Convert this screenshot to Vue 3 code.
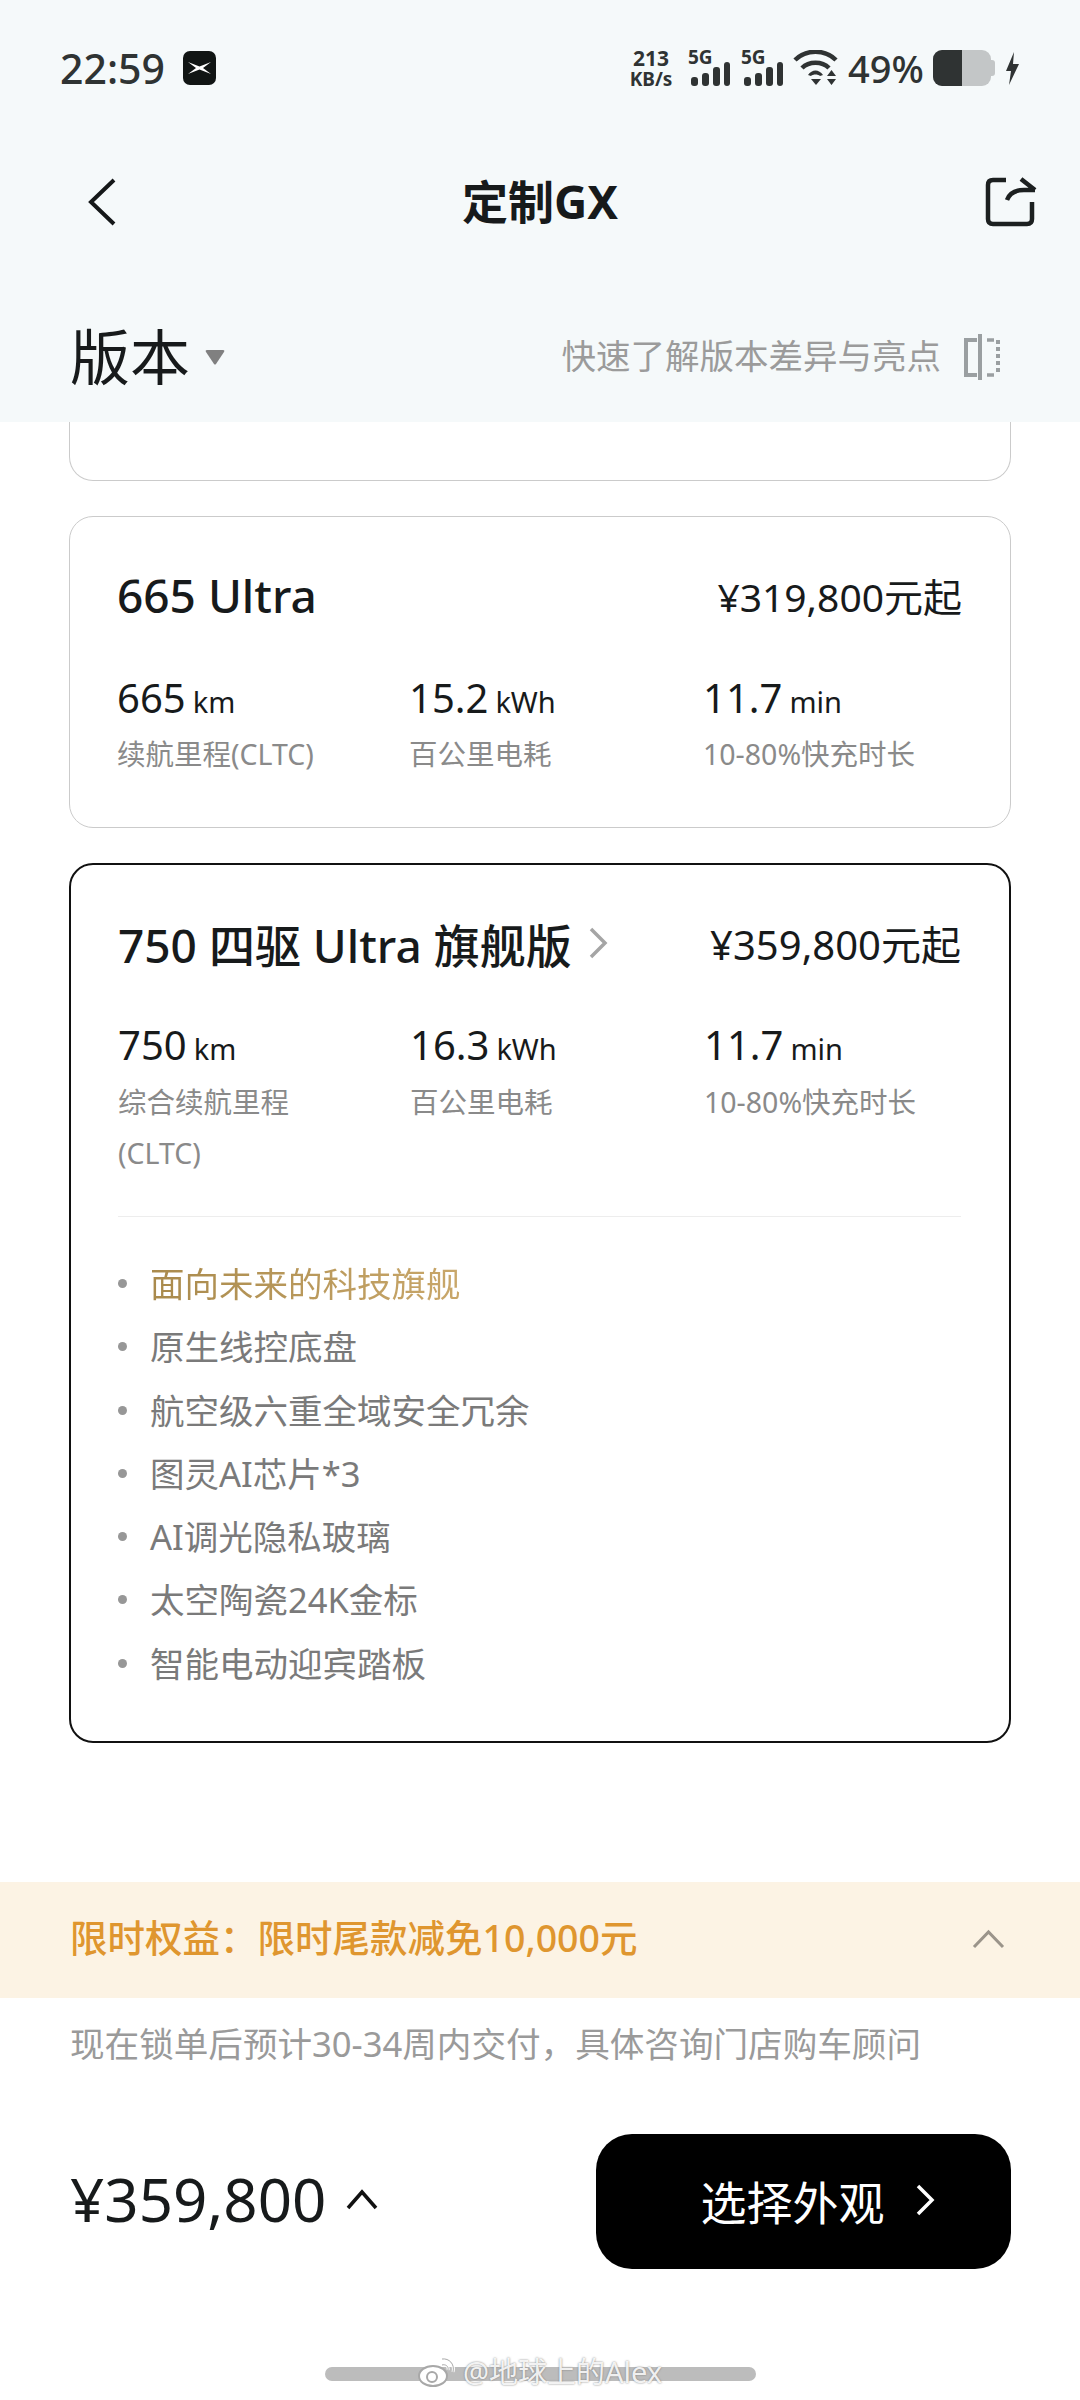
<script setup>
const stats665 = [
  { value: '665', unit: 'km', label: '续航里程(CLTC)' },
  { value: '15.2', unit: 'kWh', label: '百公里电耗' },
  { value: '11.7', unit: 'min', label: '10-80%快充时长' },
];
const stats750 = [
  { value: '750', unit: 'km', label: '综合续航里程(CLTC)' },
  { value: '16.3', unit: 'kWh', label: '百公里电耗' },
  { value: '11.7', unit: 'min', label: '10-80%快充时长' },
];
const features = [
  '原生线控底盘',
  '航空级六重全域安全冗余',
  '图灵AI芯片*3',
  'AI调光隐私玻璃',
  '太空陶瓷24K金标',
  '智能电动迎宾踏板',
];
</script>

<template>
  <div class="page">
    <header class="top">
      <div class="status">
        <div class="status-left">
          <span class="time">22:59</span>
          <svg class="app-badge" width="33" height="34" viewBox="0 0 33 34">
            <rect width="33" height="34" rx="7" fill="#111514" />
            <path d="M5 11 L16.5 15.500 L28 11 L20 17 L28 23 L16.5 18.500 L5 23 L13 17 Z" fill="#fff" />
          </svg>
        </div>
        <div class="status-right">
          <div class="speed"><span>213</span><span class="speed-unit">KB/s</span></div>
          <div v-for="n in 2" :key="n" class="net">
            <span class="net-label">5G</span>
            <svg class="bars" width="39" height="24" viewBox="0 0 39 24">
              <rect x="0" y="15" width="7" height="9" rx="3" fill="#2f3333" />
              <rect x="11" y="11" width="7" height="13" rx="3" fill="#2f3333" />
              <rect x="22" y="5" width="7" height="19" rx="3" fill="#2f3333" />
              <rect x="33" y="0" width="6" height="24" rx="3" fill="#2f3333" />
            </svg>
          </div>
          <svg class="wifi" width="45" height="36" viewBox="0 0 45 36">
            <path d="M2 10 C13 -1 32 -1 43 10" fill="none" stroke="#2f3333" stroke-width="4.500" />
            <path d="M9 18 C16 11 29 11 36 18" fill="none" stroke="#2f3333" stroke-width="4.500" />
            <path d="M15 25 C19 19 26 19 30 25 L27 26 C25 24 20 24 18 26 Z" fill="#2f3333" />
            <path d="M18 29 H28 L23 35 Z" fill="#2f3333" />
            <path d="M34 26 L38.500 20 L43 26 Z M34 29 H43 L38.500 35 Z" fill="#2f3333" />
          </svg>
          <span class="battery-text">49%</span>
          <div class="battery">
            <div class="battery-body"><div class="battery-level" :style="{ width: '50%' }"></div></div>
            <div class="battery-nub"></div>
          </div>
          <svg class="bolt" width="15" height="33" viewBox="0 0 15 33">
            <path d="M9 0 L1 19 H6 L4 33 L14 12 H8 Z" fill="#2f3333" />
          </svg>
        </div>
      </div>

      <nav class="nav">
        <svg class="back" width="30" height="48" viewBox="0 0 30 48">
          <path d="M27 2 L4 24 L27 46" fill="none" stroke="#151819" stroke-width="4" />
        </svg>
        <h1 class="nav-title">定制GX</h1>
        <svg class="share" width="52" height="50" viewBox="0 0 52 50">
          <path d="M21 3 H8 Q3 3 3 8 V42 Q3 47 8 47 H42 Q47 47 47 42 V25" fill="none" stroke="#1c2020" stroke-width="4.500" />
          <path d="M22 23 C25 15 31 13 39 13 H50 M36 2 L50 13" fill="none" stroke="#1c2020" stroke-width="4.500" />
        </svg>
      </nav>

      <div class="version-row">
        <div class="version-left">
          <span class="version-title">版本</span>
          <svg class="caret" width="22" height="18" viewBox="0 0 22 18">
            <path d="M3 2 H19 Q21 2 20 4 L12 16 Q11 17 10 16 L2 4 Q1 2 3 2 Z" fill="#808080" />
          </svg>
        </div>
        <div class="version-right">
          <span class="hint">快速了解版本差异与亮点</span>
          <svg class="compare" width="40" height="46" viewBox="0 0 40 46">
            <path d="M15 6 H4 V41 H15" fill="none" stroke="#9a9fa1" stroke-width="4" />
            <path d="M18 0 V46" stroke="#9a9fa1" stroke-width="4" />
            <path d="M25 6 H32 M25 41 H32" stroke="#9a9fa1" stroke-width="3.500" />
            <path d="M36 6 V41" stroke="#9a9fa1" stroke-width="4" stroke-dasharray="4 3" />
          </svg>
        </div>
      </div>
    </header>

    <main class="list">
      <div class="card card-stub"></div>

      <section class="card">
        <div class="card-head">
          <span class="card-name">665 Ultra</span>
          <span class="card-price">¥319,800元起</span>
        </div>
        <div class="stats">
          <div v-for="s in stats665" :key="s.label" class="stat">
            <div class="stat-value">{{ s.value }}<span class="stat-unit">{{ s.unit }}</span></div>
            <div class="stat-label">{{ s.label }}</div>
          </div>
        </div>
      </section>

      <section class="card card-active">
        <div class="card-head">
          <span class="card-name">750 四驱 Ultra 旗舰版
            <svg class="name-arrow" width="20" height="32" viewBox="0 0 20 32">
              <path d="M3 2 L17 16 L3 30" fill="none" stroke="#a5a5a5" stroke-width="3.5" />
            </svg>
          </span>
          <span class="card-price">¥359,800元起</span>
        </div>
        <div class="stats">
          <div v-for="s in stats750" :key="s.label" class="stat">
            <div class="stat-value">{{ s.value }}<span class="stat-unit">{{ s.unit }}</span></div>
            <div class="stat-label">{{ s.label }}</div>
          </div>
        </div>
        <div class="divider"></div>
        <ul class="features">
          <li class="feature"><span class="gold">面向未来的科技旗舰</span></li>
          <li v-for="f in features" :key="f" class="feature">{{ f }}</li>
        </ul>
      </section>
    </main>

    <footer class="bottom">
      <div class="promo">
        <span class="promo-text">限时权益：限时尾款减免10,000元</span>
        <svg class="promo-arrow" width="33" height="20" viewBox="0 0 33 20">
          <path d="M2 18 L16.500 3 L31 18" fill="none" stroke="#9b948a" stroke-width="3" />
        </svg>
      </div>
      <p class="delivery">现在锁单后预计30-34周内交付，具体咨询门店购车顾问</p>
      <div class="buy">
        <div class="total">
          <span class="total-price">¥359,800</span>
          <svg width="32" height="22" viewBox="0 0 32 22">
            <path d="M2 20 L16 4 L30 20" fill="none" stroke="#111" stroke-width="3.500" />
          </svg>
        </div>
        <button class="next">
          <span>选择外观</span>
          <svg width="20" height="32" viewBox="0 0 20 32">
            <path d="M3 2 L17 16 L3 30" fill="none" stroke="#fff" stroke-width="3.500" />
          </svg>
        </button>
      </div>
      <div class="home-bar"></div>
    </footer>

    <div class="watermark">
      <svg width="38" height="30" viewBox="0 0 38 30">
        <ellipse cx="15" cy="19" rx="14" ry="10" fill="#fff" stroke="#a8a8a8" stroke-width="2" />
        <circle cx="14" cy="20" r="5" fill="#fff" stroke="#a8a8a8" stroke-width="2" />
        <path d="M24 2 C31 1 37 7 35 15 M24 8 C27 7 31 9 30 13" fill="none" stroke="#fff" stroke-width="3" />
        <path d="M24 2 C31 1 37 7 35 15 M24 8 C27 7 31 9 30 13" fill="none" stroke="#a8a8a8" stroke-width="1" />
      </svg>
      <span>@地球上的Alex</span>
    </div>
  </div>
</template>

<style scoped>
.page {
  position: relative;
  width: 1080px;
  height: 2400px;
  display: flex;
  flex-direction: column;
  overflow: hidden;
  background: #fff;
  color: #171a1b;
  font-family: "Noto Sans", "Noto Sans CJK SC", sans-serif;
}

.top {
  background: #f5f9fa;
  height: 422px;
  flex: none;
}

.status {
  height: 136px;
  padding: 0 60px;
  display: flex;
  justify-content: space-between;
  align-items: center;
}

.status-left {
  display: flex;
  align-items: center;
  gap: 18px;
}

.time {
  font-size: 41px;
  font-weight: 500;
  color: #2f3333;
}

.status-right {
  display: flex;
  align-items: center;
  color: #2f3333;
}

.speed {
  width: 44px;
  display: flex;
  flex-direction: column;
  align-items: center;
  font-size: 21px;
  font-weight: 700;
  line-height: 22px;
}

.speed-unit {
  font-size: 19px;
  line-height: 20px;
  white-space: nowrap;
}

.net {
  margin-left: 16px;
  width: 41px;
  height: 36px;
  position: relative;
}

.net + .net {
  margin-left: 12px;
}

.net-label {
  position: absolute;
  left: -1px;
  top: -6px;
  font-size: 19px;
  font-weight: 700;
}

.bars {
  position: absolute;
  right: 0;
  bottom: 0;
}

.wifi {
  margin-left: 10px;
}

.battery-text {
  margin-left: 10px;
  width: 75px;
  font-size: 38px;
  font-weight: 500;
  white-space: nowrap;
}

.battery {
  margin-left: 10px;
  width: 62px;
  height: 36px;
  display: flex;
  align-items: center;
}

.battery-body {
  width: 58px;
  height: 36px;
  border-radius: 9px;
  background: #c3c6c7;
  overflow: hidden;
}

.battery-nub {
  width: 4px;
  height: 16px;
  border-radius: 0 3px 3px 0;
  background: #c3c6c7;
}

.battery-level {
  height: 100%;
  background: #2f3333;
}

.bolt {
  margin-left: 10px;
}

.nav {
  height: 132px;
  padding: 0 43px 0 87px;
  display: flex;
  justify-content: space-between;
  align-items: center;
  position: relative;
}

.nav-title {
  position: absolute;
  left: 0;
  right: 0;
  top: 35px;
  margin: 0;
  line-height: 60px;
  text-align: center;
  font-size: 46px;
  font-weight: 700;
}

.version-row {
  height: 130px;
  margin-top: 21px;
  padding: 0 78px 0 70px;
  display: flex;
  justify-content: space-between;
  align-items: center;
}

.version-left {
  display: flex;
  align-items: center;
  gap: 14px;
}

.version-title {
  font-size: 60px;
}

.caret {
  margin-top: 6px;
}

.version-right {
  display: flex;
  align-items: center;
  gap: 21px;
}

.hint {
  font-size: 34.5px;
  color: #9b9b9b;
}

.compare {
  margin-top: 6px;
}

.list {
  flex: 1;
  padding: 0 69px;
  display: flex;
  flex-direction: column;
  gap: 35px;
  min-height: 0;
}

.card {
  border: 1.5px solid #cbcbcb;
  border-radius: 24px;
  padding: 48px 48px 0 47px;
  flex: none;
  height: 312px;
  box-sizing: border-box;
}

.card-stub {
  height: 59px;
  padding: 0;
  border-top: 0;
  border-top-left-radius: 0;
  border-top-right-radius: 0;
}

.card-active {
  height: 880px;
  border: 2px solid #111;
}

.card-head {
  height: 60px;
  display: flex;
  justify-content: space-between;
  align-items: center;
}

.card-name {
  font-size: 46px;
  font-weight: 500;
  display: flex;
  align-items: center;
  white-space: pre-wrap;
}

.name-arrow {
  margin-left: 4px;
}

.card-price {
  font-size: 39px;
}

.card-active .card-price {
  font-size: 40px;
}

.stats {
  margin-top: 48px;
  display: grid;
  grid-template-columns: 292px 294px 1fr;
}

.card-active .stats {
  margin-top: 47px;
}

.stat-value {
  height: 50px;
  line-height: 50px;
  font-size: 40px;
}

.stat-unit {
  margin-left: 7px;
  font-size: 29px;
}

.stat-label {
  margin-top: 6px;
  width: 233px;
  line-height: 51px;
  font-size: 28.5px;
  color: #8a8a8a;
}

.card-active .stat-label {
  margin-top: 7px;
}

.divider {
  margin-top: 37px;
  height: 1px;
  background: #ededed;
}

.features {
  list-style: none;
  margin: 35px 0 0;
  padding: 0;
}

.feature {
  height: 63.3px;
  line-height: 63.3px;
  padding-left: 32px;
  position: relative;
  font-size: 34.5px;
  color: #7a7a7a;
}

.feature::before {
  content: "";
  position: absolute;
  left: 0;
  top: 27px;
  width: 9px;
  height: 9px;
  border-radius: 50%;
  background: #979797;
}

.gold {
  background: linear-gradient(90deg, #a98a4c, #c9a76a);
  -webkit-background-clip: text;
  background-clip: text;
  color: transparent;
}

.bottom {
  flex: none;
  height: 518px;
  display: flex;
  flex-direction: column;
}

.promo {
  height: 116px;
  box-sizing: border-box;
  background: #fcf3e4;
  padding: 0 75px 9px 70px;
  display: flex;
  justify-content: space-between;
  align-items: center;
  flex: none;
}

.promo-arrow {
  margin-top: 6px;
}

.promo-text {
  font-size: 37.5px;
  font-weight: 500;
  color: #df962f;
}

.delivery {
  margin: 22px 0 0 70px;
  line-height: 48px;
  font-size: 34.600px;
  color: #9a9a9a;
}

.buy {
  margin-top: 66px;
  padding: 0 69px 0 70px;
  display: flex;
  justify-content: space-between;
  align-items: center;
}

.total {
  display: flex;
  align-items: center;
  gap: 20px;
  padding-bottom: 6px;
}

.total-price {
  font-size: 60px;
}

.next {
  width: 415px;
  height: 135px;
  border: 0;
  border-radius: 36px;
  background: #000;
  color: #fff;
  font-family: inherit;
  font-size: 46px;
  padding: 0 0 4px 28px;
  display: flex;
  align-items: center;
  justify-content: center;
  gap: 30px;
}

.home-bar {
  margin: 98px auto 0;
  width: 431px;
  height: 14px;
  border-radius: 7px;
  background: #bcbcbc;
}

.watermark {
  position: absolute;
  left: 418px;
  top: 2352px;
  display: flex;
  align-items: center;
  gap: 7px;
  font-size: 29px;
  line-height: 40px;
  color: rgba(255, 255, 255, 0.9);
  text-shadow: 0 0 2px #777;
}
</style>
